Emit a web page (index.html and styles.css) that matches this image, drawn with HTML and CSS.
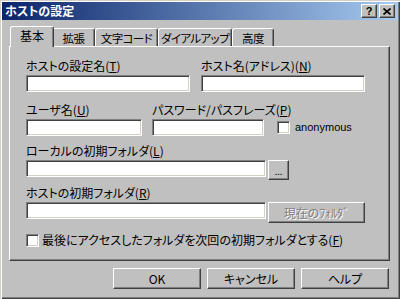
FILE: index.html
```html
<!DOCTYPE html>
<html lang="ja">
<head>
  <meta charset="UTF-8">
  <title>ホストの設定</title>
  <link rel="stylesheet" href="styles.css">
</head>
<body>
  <div class="window">
    <div class="titlebar">
      <span class="title">ホストの設定</span>
      <div class="caption-buttons">
        <span class="cap-btn">?</span>
        <span class="cap-btn">
          <svg width="8" height="7" viewBox="0 0 8 7">
            <path d="M0.5 0.5 L7.5 6.5 M7.5 0.5 L0.5 6.5" stroke="#000" stroke-width="1.6" fill="none"/>
          </svg>
        </span>
      </div>
    </div>

    <div class="tabs">
      <div class="tab active tab-basic">基本</div>
      <div class="tab tab-ext">拡張</div>
      <div class="tab tab-code">文字コード</div>
      <div class="tab tab-dial">ダイアルアップ</div>
      <div class="tab tab-adv">高度</div>
    </div>

    <div class="panel">
      <div class="row row-1">
        <div class="field f-setname">
          <label>ホストの設定名(<u>T</u>)</label>
          <div class="input"></div>
        </div>
        <div class="field f-hostname">
          <label>ホスト名(アドレス)(<u>N</u>)</label>
          <div class="input"></div>
        </div>
      </div>

      <div class="row row-2">
        <div class="field f-user">
          <label>ユーザ名(<u>U</u>)</label>
          <div class="input"></div>
        </div>
        <div class="field f-pass">
          <label>パスワード/パスフレーズ(<u>P</u>)</label>
          <div class="input"></div>
        </div>
        <div class="anon">
          <span class="check"></span>
          <span class="anon-text">anonymous</span>
        </div>
      </div>

      <div class="row row-3">
        <div class="field">
          <label>ローカルの初期フォルダ(<u>L</u>)</label>
          <div class="input-row">
            <div class="input wide"></div>
            <div class="btn btn-browse">...</div>
          </div>
        </div>
      </div>

      <div class="row row-4">
        <div class="field">
          <label>ホストの初期フォルダ(<u>R</u>)</label>
          <div class="input-row">
            <div class="input wide"></div>
            <div class="btn btn-current disabled">現在のﾌｫﾙﾀﾞ</div>
          </div>
        </div>
      </div>

      <div class="check-row">
        <span class="check"></span>
        <span class="check-text">最後にアクセスしたフォルダを次回の初期フォルダとする(<u>F</u>)</span>
      </div>
    </div>

    <div class="buttons">
      <div class="btn btn-main">OK</div>
      <div class="btn btn-main">キャンセル</div>
      <div class="btn btn-main">ヘルプ</div>
    </div>
  </div>
</body>
</html>
```

FILE: styles.css
```css
body {
  margin: 0;
  font-family: "Noto Sans CJK JP", sans-serif;
  font-size: 12px;
  font-feature-settings: "palt";
  background: #c0c0c0;
  color: #000;
}

.window {
  width: 400px;
  height: 299px;
  box-sizing: border-box;
  padding: 2px;
  background: #c0c0c0;
  box-shadow: inset 1px 1px #d4d0c8, inset 2px 2px #fff, inset -1px -1px #404040, inset -2px -2px #808080;
}

/* title bar */
.titlebar {
  height: 18px;
  display: flex;
  align-items: center;
  padding: 0 3px 0 3px;
  background: linear-gradient(to right, #0a246a, #a6caf0);
  color: #fff;
  font-weight: bold;
}
.title {
  line-height: 18px;
}
.caption-buttons {
  margin-left: auto;
  display: flex;
  gap: 2px;
}
.cap-btn {
  width: 16px;
  height: 14px;
  box-sizing: border-box;
  background: #c0c0c0;
  border: 1px solid;
  border-color: #fff #404040 #404040 #fff;
  box-shadow: inset -1px -1px #808080;
  display: flex;
  align-items: center;
  justify-content: center;
  color: #000;
  font: bold 11px "Liberation Sans", sans-serif;
}

/* tabs */
.tabs {
  display: flex;
  align-items: flex-end;
  height: 20px;
  margin-top: 6px;
  padding-left: 10px;
}
.tab {
  height: 18px;
  box-sizing: border-box;
  border-top: 1px solid #fff;
  border-left: 1px solid #fff;
  border-right: 1px solid #404040;
  border-radius: 3px 3px 0 0;
  box-shadow: inset -1px 0 #808080;
  display: flex;
  align-items: center;
  justify-content: center;
  font-size: 11.5px;
  letter-spacing: -0.6px;
  line-height: 14px;
  white-space: nowrap;
}
.tab.active {
  height: 21px;
  margin: 0 -2px -1px;
  position: relative;
  z-index: 1;
  background: #c0c0c0;
  padding-bottom: 2px;
  font-size: 12px;
  letter-spacing: 0;
}
.tab-basic { width: 44px; }
.tab-ext { width: 43px; }
.tab-code { width: 63px; }
.tab-dial { width: 74px; }
.tab-adv { width: 42px; }

/* panel */
.panel {
  width: 381px;
  height: 215px;
  box-sizing: border-box;
  margin-left: 7px;
  border: 1px solid;
  border-color: #fff #404040 #404040 #fff;
  box-shadow: inset -1px -1px #808080;
  padding: 12px 0 0 16px;
}

.row {
  display: flex;
  align-items: flex-end;
}
.row-2 { margin-top: 11px; }
.row-3 { margin-top: 8px; }
.row-4 { margin-top: 6px; }

.field label {
  display: block;
  line-height: 14px;
  white-space: nowrap;
}
.f-setname { width: 164px; }
.f-hostname { width: 164px; margin-left: 11px; }
.f-user { width: 116px; }
.f-pass { width: 112px; margin-left: 10px; }

.input {
  height: 17px;
  margin-top: 2px;
  box-sizing: border-box;
  background: #fff;
  border: 1px solid;
  border-color: #808080 #fff #fff #808080;
  box-shadow: inset 1px 1px #404040, inset -1px -1px #d4d0c8;
}
.input-row {
  display: flex;
  align-items: flex-start;
  gap: 2px;
  margin-top: 2px;
}
.input-row .input {
  margin-top: 0;
}
.input.wide { width: 240px; }

.check {
  width: 13px;
  height: 13px;
  box-sizing: border-box;
  background: #fff;
  border: 1px solid;
  border-color: #808080 #fff #fff #808080;
  box-shadow: inset 1px 1px #404040, inset -1px -1px #d4d0c8;
  flex-shrink: 0;
}
.anon {
  display: flex;
  align-items: center;
  margin-left: 13px;
  margin-bottom: 2px;
}
.anon-text {
  margin-left: 5px;
  font-family: "Liberation Sans", sans-serif;
  font-size: 11px;
  line-height: 13px;
}

.check-row {
  display: flex;
  align-items: center;
  margin-top: 10px;
  height: 14px;
}
.check-text {
  margin-left: 3px;
  line-height: 14px;
  white-space: nowrap;
}

/* buttons */
.btn {
  box-sizing: border-box;
  border: 1px solid;
  border-color: #fff #404040 #404040 #fff;
  box-shadow: inset -1px -1px #808080;
  display: flex;
  align-items: center;
  justify-content: center;
  white-space: nowrap;
  line-height: 14px;
}
.btn-browse {
  width: 21px;
  height: 20px;
  font-size: 9px;
  padding-top: 3px;
}
.btn-current {
  width: 97px;
  height: 21px;
}
.btn.disabled {
  color: #808080;
  text-shadow: 1px 1px #fff;
}
.buttons {
  display: flex;
  justify-content: flex-end;
  gap: 6px;
  margin-top: 7px;
  padding-right: 9px;
}
.btn-main {
  width: 88px;
  height: 21px;
}
```
